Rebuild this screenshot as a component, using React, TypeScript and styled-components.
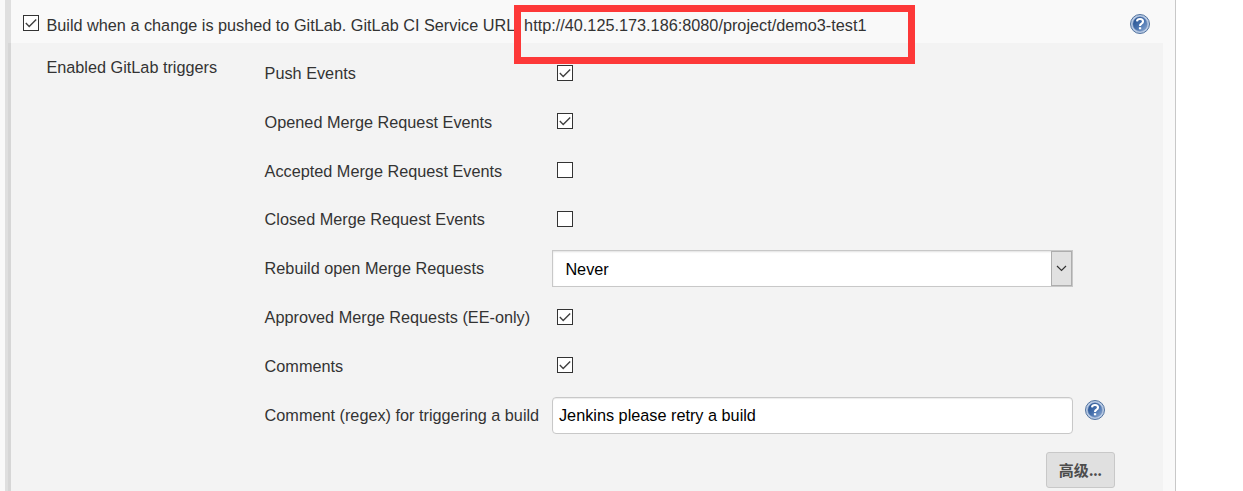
import React from 'react';
import styled, { createGlobalStyle } from 'styled-components';

const GlobalStyle = createGlobalStyle`
  *, *::before, *::after { box-sizing: border-box; }
  body {
    margin: 0;
    background: #fff;
    color: #333;
    font: 16.25px/20px "Liberation Sans", Arial, "Noto Sans CJK SC", sans-serif;
  }
`;

const Page = styled.main`
  display: flex;
  flex-direction: column;
  position: relative;
  width: 1176px;
  height: 491px;
  padding-left: 5px;
  overflow: hidden;
  background: #f9f9f9;
  border-right: 1px solid #c8c8c8;
`;

const TriggerHeader = styled.header`
  display: flex;
  align-items: flex-start;
  height: 43px;
  padding: 14px 25px 0 12px;
  border-left: 6px solid #dfdfdf;
`;

const HeaderText = styled.span<{ $gap: number }>`
  margin: 1px 0 0 ${p => p.$gap}px;
  white-space: nowrap;
`;

const Spacer = styled.span`
  flex: 1;
`;

const Panel = styled.section`
  display: flex;
  flex: 1;
  width: 1158px;
  background: #f3f3f3;
  border-left: 3px solid #dfdfdf;
`;

const PanelInner = styled.div`
  display: flex;
  flex: 1;
  padding-top: 6px;
  border-left: 3px solid #d6d6d6;
`;

const SectionLabel = styled.div`
  width: 253.6px;
  padding: 8px 0 0 35.4px;
`;

const Fields = styled.div`
  width: 875px;
`;

const Row = styled.div<{ $height: number }>`
  display: flex;
  align-items: flex-start;
  height: ${p => p.$height}px;
`;

const Label = styled.label`
  width: 287.4px;
  padding-top: 14px;
  white-space: nowrap;
`;

const Box = styled.span<{ $top: number; $left: number }>`
  flex: none;
  width: 16px;
  height: 16px;
  margin: ${p => p.$top}px 0 0 ${p => p.$left}px;
  background: #fff;
  border: 1px solid #333;

  svg { display: block; }
`;

const Select = styled.div`
  display: flex;
  align-items: stretch;
  justify-content: space-between;
  width: 521px;
  height: 37px;
  margin-top: 6px;
  padding-left: 12.4px;
  background: #fff;
  border: 1px solid #c8c8c8;
  box-shadow: inset 0 1px 2px rgba(0, 0, 0, 0.12);
  color: #000;
  line-height: 37px;
`;

const Arrow = styled.span`
  display: flex;
  align-items: center;
  justify-content: center;
  width: 21px;
  background: #e1e1e1;
  border: 1px solid #adadad;
`;

const TextField = styled.div`
  width: 521px;
  height: 37px;
  margin-top: 6px;
  padding-left: 6px;
  background: #fff;
  border: 1px solid #c8c8c8;
  border-radius: 4px;
  box-shadow: inset 0 1px 1px rgba(0, 0, 0, 0.08);
  color: #000;
  line-height: 35px;
`;

const HelpSlot = styled.span`
  margin: 9px 0 0 12px;
`;

const Help = styled.svg`
  display: block;
  flex: none;
`;

const Advanced = styled.button`
  display: block;
  width: 69px;
  height: 36px;
  margin: 12px 0 0 781px;
  padding: 0;
  background: #e0e0e0;
  border: 1px solid #c8c8c8;
  border-radius: 3px;
  color: #4d4d4d;
  font: bold 15px/34px "Noto Sans CJK SC", sans-serif;
`;

const Dots = styled.span`
  letter-spacing: -0.6px;
`;

const Highlight = styled.div`
  position: absolute;
  left: 514px;
  top: 5px;
  width: 401px;
  height: 59px;
  border: 7px solid #fd3838;
`;

function Checkbox({ checked, top, left }: { checked: boolean; top: number; left: number }) {
  return (
    <Box $top={top} $left={left} role="checkbox" aria-checked={checked}>
      {checked && (
        <svg width="14" height="14" viewBox="0 0 14 14" fill="none" stroke="#404040" strokeWidth="1.4">
          <path d="M1.8 7.1 5.2 10.5 12.2 3.5" />
        </svg>
      )}
    </Box>
  );
}

function HelpIcon() {
  return (
    <Help width="20" height="20" viewBox="0 0 20 20">
      <defs>
        <linearGradient id="helpFill" x1="0" y1="0" x2="1" y2="1">
          <stop offset="0" stopColor="#1d4a8a" />
          <stop offset="0.55" stopColor="#4a74b0" />
          <stop offset="1" stopColor="#8fadd6" />
        </linearGradient>
      </defs>
      <circle cx="10" cy="10" r="9.5" fill="#b9cbe5" stroke="#52739f" strokeWidth="1" />
      <circle cx="10" cy="10" r="7.2" fill="url(#helpFill)" stroke="#6685b3" strokeWidth="0.5" />
      <path d="M7 7.3Q7.2 5 10 5Q13 5 13 7.5Q13 8.8 11.5 9.7Q10 10.5 10 12" fill="none" stroke="#fff" strokeWidth="2.1" />
      <path d="M8.9 13.2h2.3v2.1H8.9z" fill="#fff" />
    </Help>
  );
}

type Trigger = { label: string; height: number; checked?: boolean; top?: number };

const triggers: Trigger[] = [
  { label: 'Push Events', height: 49, checked: true, top: 16 },
  { label: 'Opened Merge Request Events', height: 49, checked: true, top: 15 },
  { label: 'Accepted Merge Request Events', height: 48, checked: false, top: 15 },
  { label: 'Closed Merge Request Events', height: 49, checked: false, top: 16 },
  { label: 'Rebuild open Merge Requests', height: 49 },
  { label: 'Approved Merge Requests (EE-only)', height: 49, checked: true, top: 16 },
  { label: 'Comments', height: 49, checked: true, top: 15 },
];

export default function App() {
  return (
    <>
      <GlobalStyle />
      <Page>
        <TriggerHeader>
          <Checkbox checked top={1} left={0} />
          <HeaderText $gap={7.4}>Build when a change is pushed to GitLab. GitLab CI Service URL:</HeaderText>
          <HeaderText $gap={4.4}>http://40.125.173.186:8080/project/demo3-test1</HeaderText>
          <Spacer />
          <HelpIcon />
        </TriggerHeader>
        <Panel>
          <PanelInner>
            <SectionLabel>Enabled GitLab triggers</SectionLabel>
            <Fields>
              {triggers.map(t => (
                <Row key={t.label} $height={t.height}>
                  <Label>{t.label}</Label>
                  {t.checked === undefined ? (
                    <Select>
                      Never
                      <Arrow>
                        <svg width="11" height="7" viewBox="0 0 11 7" fill="none" stroke="#333" strokeWidth="1.2">
                          <path d="M1 1 5.5 5.5 10 1" />
                        </svg>
                      </Arrow>
                    </Select>
                  ) : (
                    <Checkbox checked={t.checked} top={t.top ?? 15} left={5} />
                  )}
                </Row>
              ))}
              <Row $height={49}>
                <Label>Comment (regex) for triggering a build</Label>
                <TextField>Jenkins please retry a build</TextField>
                <HelpSlot>
                  <HelpIcon />
                </HelpSlot>
              </Row>
              <Advanced>高级<Dots>...</Dots></Advanced>
            </Fields>
          </PanelInner>
        </Panel>
        <Highlight />
      </Page>
    </>
  );
}
